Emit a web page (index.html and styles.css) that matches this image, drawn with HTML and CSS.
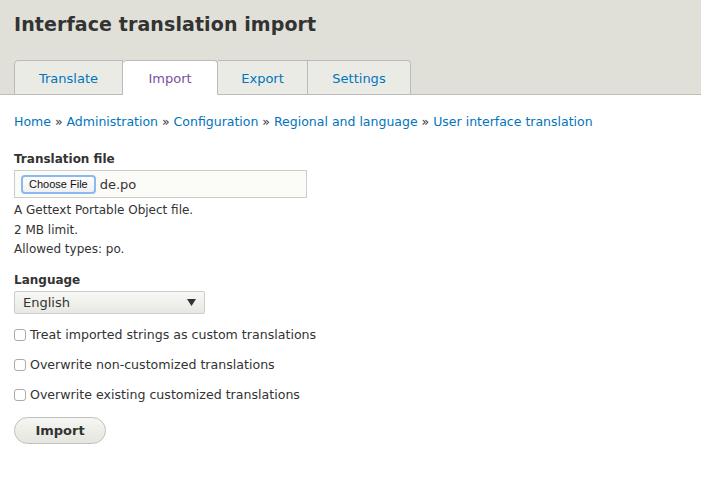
FILE: index.html
```html
<!DOCTYPE html>
<html>
<head>
<meta charset="utf-8">
<link rel="stylesheet" href="styles.css">
</head>
<body>
<header class="branding">
  <h1 class="page-title">Interface translation import</h1>
  <ul class="tabs">
    <li class="tab"><a href="#">Translate</a></li>
    <li class="tab active"><a href="#">Import</a></li>
    <li class="tab"><a href="#">Export</a></li>
    <li class="tab"><a href="#">Settings</a></li>
  </ul>
</header>
<main class="page">
  <nav class="breadcrumb"><a href="#">Home</a> » <a href="#">Administration</a> » <a href="#">Configuration</a> » <a href="#">Regional and language</a> » <a href="#">User interface translation</a></nav>
  <form class="form">
    <div class="item">
      <label class="label">Translation file</label>
      <div class="file-box"><span class="file-btn">Choose File</span><span class="file-name">de.po</span></div>
      <div class="descs">
        <div class="desc">A Gettext Portable Object file.</div>
        <div class="desc">2 MB limit.</div>
        <div class="desc">Allowed types: po.</div>
      </div>
    </div>
    <div class="item item-select">
      <label class="label">Language</label>
      <div class="select"><span>English</span><svg class="caret" width="9" height="7" viewBox="0 0 9 7"><path d="M0 0H9L4.5 7Z" fill="#333"/></svg></div>
    </div>
    <label class="check"><span class="box"></span>Treat imported strings as custom translations</label>
    <label class="check"><span class="box"></span>Overwrite non-customized translations</label>
    <label class="check"><span class="box"></span>Overwrite existing customized translations</label>
    <div class="actions"><span class="button">Import</span></div>
  </form>
</main>
</body>
</html>
```

FILE: styles.css
```css
* { box-sizing: border-box; }
html, body { margin: 0; padding: 0; background: #fff; }
body {
  font-family: "DejaVu Sans", Verdana, sans-serif;
  font-size: 12px;
  color: #333;
}
a { color: #0074bd; text-decoration: none; }

.branding {
  background: #e0e0d8;
  border-bottom: 1px solid #bebfb9;
  padding: 0 14px;
  height: 95px;
  display: flex;
  flex-direction: column;
}
.page-title {
  margin: 11px 0 0;
  font-size: 19px;
  font-weight: bold;
  color: #333;
  line-height: 26px;
  letter-spacing: 0.1px;
}
.tabs {
  list-style: none;
  margin: auto 0 -1px;
  padding: 0;
  display: flex;
}
.tab {
  height: 35px;
  padding-top: 2px;
  background: #ebebe5;
  border: 1px solid #bbb;
  border-left: none;
  display: flex;
  align-items: center;
  justify-content: center;
  font-size: 13px;
}
.tab:first-child { border-left: 1px solid #bbb; border-top-left-radius: 4px; width: 109px; }
.tab:nth-child(2) { width: 95px; }
.tab:nth-child(3) { width: 90px; }
.tab:last-child { border-top-right-radius: 4px; width: 103px; }
.tab.active {
  background: #fff;
  border-bottom-color: #fff;
  border-top-left-radius: 4px;
  border-top-right-radius: 4px;
}
.tab.active a { color: #7a4fa0; }

.page { padding: 0 14px; }
.breadcrumb {
  margin-top: 18px;
  font-size: 12.5px;
  line-height: 18px;
  color: #333;
}
.form { margin-top: 20px; }
.item { margin-bottom: 12px; }
.item-select { margin-bottom: 13px; }
.label {
  display: block;
  font-weight: bold;
  font-size: 12px;
  line-height: 16px;
  margin-bottom: 3px;
}
.file-box {
  width: 293px;
  height: 28px;
  border: 1px solid #ccc;
  background: #fbfbf8;
  display: flex;
  align-items: center;
  padding-left: 6px;
}
.file-btn {
  font-family: "Liberation Sans", Arial, sans-serif;
  font-size: 11px;
  color: #111;
  background: linear-gradient(#fff, #f0f0f0);
  border: 2px solid #8ab8f0;
  border-radius: 4px;
  padding: 1px 6px;
  line-height: 13px;
}
.file-name { margin-left: 4px; font-size: 13px; color: #333; }
.descs { margin-top: 3px; }
.desc {
  font-size: 12px;
  line-height: 19.5px;
  color: #333;
}
.select {
  width: 191px;
  height: 23px;
  border: 1px solid #ccc;
  border-radius: 2px;
  background: linear-gradient(#f8f8f5, #e8e8e3);
  display: flex;
  align-items: center;
  justify-content: space-between;
  padding: 0 8px;
  font-size: 13px;
}
.check {
  display: flex;
  align-items: center;
  font-size: 12.6px;
  line-height: 16px;
  margin-bottom: 14px;
}
.box {
  width: 12px;
  height: 12px;
  border: 1px solid #aaa;
  border-radius: 3px;
  background: #fff;
  margin-right: 4px;
}
.actions { margin-top: 2px; }
.button {
  display: inline-flex;
  align-items: center;
  justify-content: center;
  width: 92px;
  height: 27px;
  border: 1px solid #c0c0c0;
  border-radius: 14px;
  background: linear-gradient(#f6f6f2, #e6e6e0);
  font-weight: bold;
  font-size: 13px;
  color: #333;
}
```
